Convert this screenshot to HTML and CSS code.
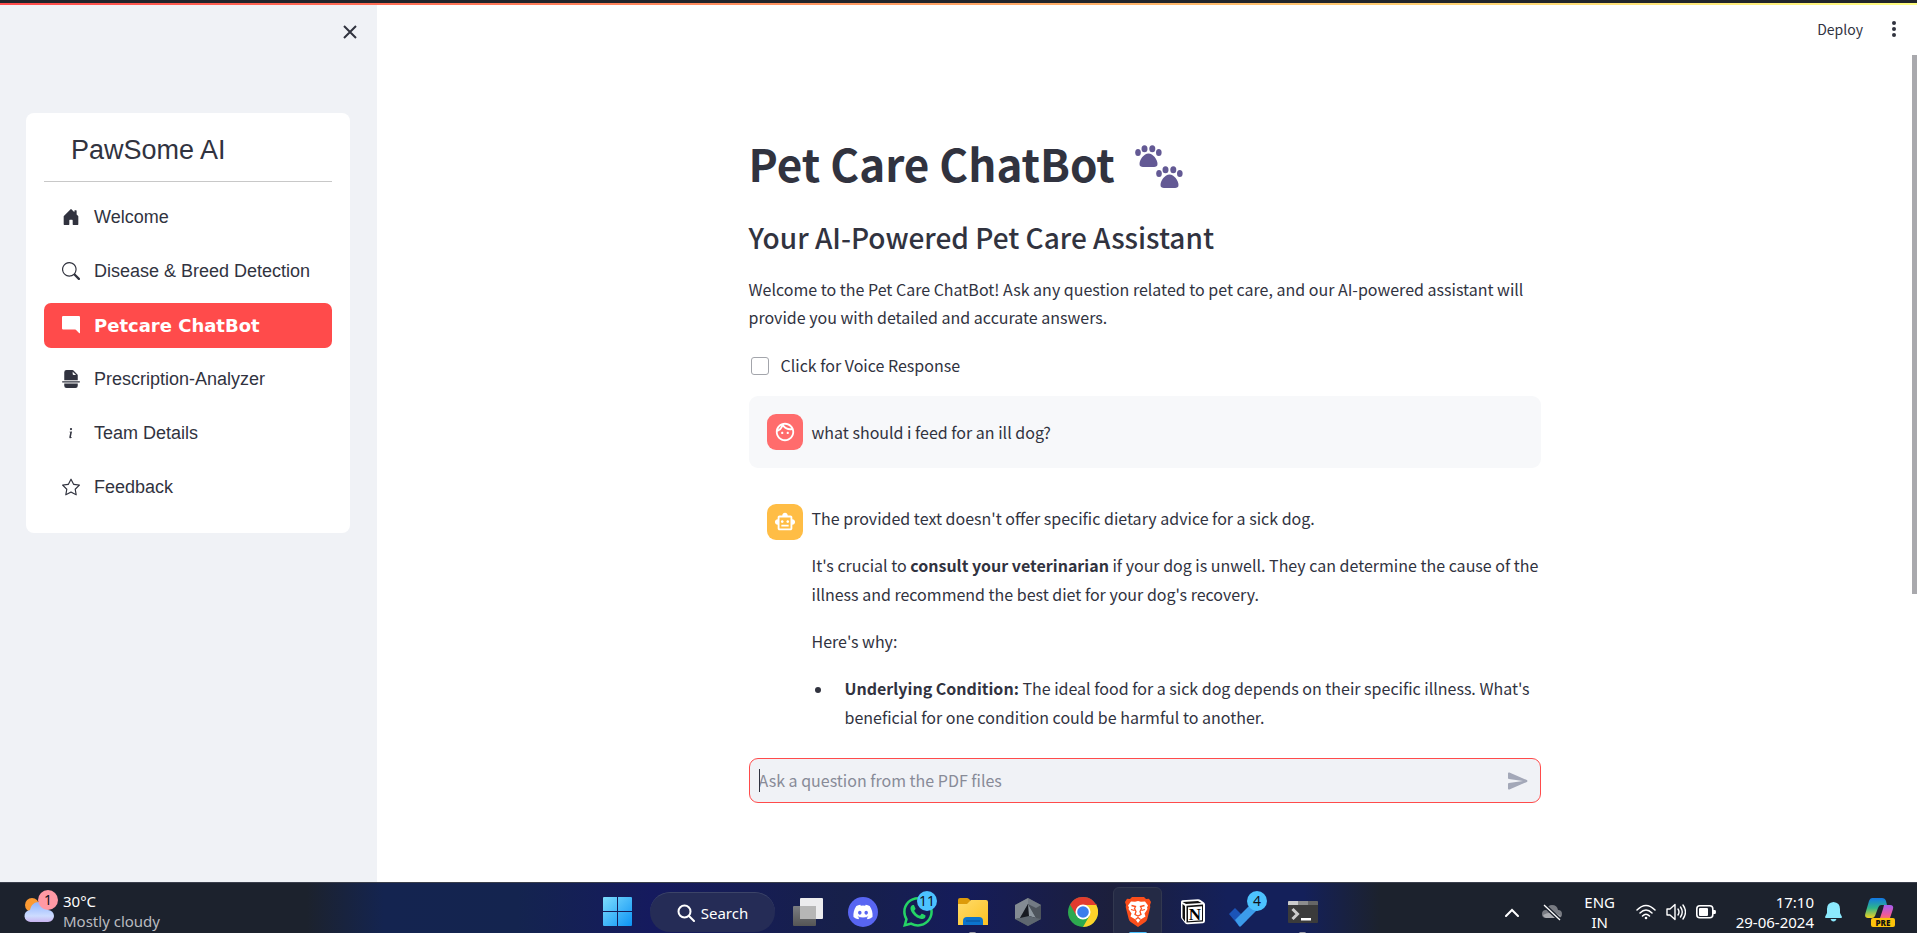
FILE: index.html
```html
<!DOCTYPE html>
<html lang="en">
<head>
<meta charset="utf-8">
<title>PawSome AI</title>
<link rel="stylesheet" href="styles.css">
</head>
<body>
<div class="edge"></div>
<div class="app">
  <aside class="sidebar">
    <div class="sidebar-top">
      <button class="icon-btn" aria-label="Close sidebar"><svg width="14" height="14" viewBox="0 0 14 14" fill="none" stroke="currentColor" stroke-width="2"><path d="M1 1l12 12M13 1L1 13"/></svg></button>
    </div>
    <nav class="menu">
      <h2 class="menu-title">PawSome AI</h2>
      <ul class="menu-list">
        <li><a class="menu-item" href="#"><svg class="menu-icon" viewBox="0 0 16 16"><path d="M6.5 14.5v-3.505c0-.245.25-.495.5-.495h2c.25 0 .5.25.5.5v3.5a.5.5 0 0 0 .5.5h4a.5.5 0 0 0 .5-.5v-7a.5.5 0 0 0-.146-.354L13 5.793V2.5a.5.5 0 0 0-.5-.5h-1a.5.5 0 0 0-.5.5v1.293L8.354 1.146a.5.5 0 0 0-.708 0l-6 6A.5.5 0 0 0 1.5 7.5v7a.5.5 0 0 0 .5.5h4a.5.5 0 0 0 .5-.5z"/></svg>Welcome</a></li>
        <li><a class="menu-item" href="#"><svg class="menu-icon" viewBox="0 0 16 16"><path d="M11.742 10.344a6.5 6.5 0 1 0-1.397 1.398h-.001c.03.04.062.078.098.115l3.85 3.85a1 1 0 0 0 1.415-1.414l-3.85-3.85a1.007 1.007 0 0 0-.115-.1zM12 6.5a5.5 5.5 0 1 1-11 0 5.5 5.5 0 0 1 11 0z"/></svg>Disease &amp; Breed Detection</a></li>
        <li><a class="menu-item active" href="#" aria-current="page"><svg class="menu-icon" viewBox="0 0 16 16"><path d="M15 0a1 1 0 0 1 1 1v13.793a.5.5 0 0 1-.854.353l-2.853-2.853a1 1 0 0 0-.707-.293H1a1 1 0 0 1-1-1V1a1 1 0 0 1 1-1z"/></svg>Petcare ChatBot</a></li>
        <li><a class="menu-item" href="#"><svg class="menu-icon" viewBox="0 0 16 16"><path d="M4 0h5.293A1 1 0 0 1 10 .293L13.707 4a1 1 0 0 1 .293.707V9H2V2a2 2 0 0 1 2-2m5.500 1.500v2a1 1 0 0 0 1 1h2zM2 12h12v2a2 2 0 0 1-2 2H4a2 2 0 0 1-2-2zM.5 10a.5.5 0 0 0 0 1h15a.5.5 0 0 0 0-1z"/></svg>Prescription-Analyzer</a></li>
        <li><a class="menu-item" href="#"><svg class="menu-icon" viewBox="0 0 16 16"><path d="m8.930 6.588-2.290.287-.082.38.45.083c.294.07.352.176.288.469l-.738 3.468c-.194.897.105 1.319.808 1.319.545 0 1.178-.252 1.465-.598l.088-.416c-.2.176-.492.246-.686.246-.275 0-.375-.193-.304-.533zM9 4.500a1 1 0 1 1-2 0 1 1 0 0 1 2 0"/></svg>Team Details</a></li>
        <li><a class="menu-item" href="#"><svg class="menu-icon" viewBox="0 0 16 16"><path d="M2.866 14.850c-.078.444.36.791.746.593l4.390-2.256 4.389 2.256c.386.198.824-.149.746-.592l-.83-4.730 3.522-3.356c.33-.314.16-.888-.282-.95l-4.898-.696L8.465.792a.513.513 0 0 0-.927 0L5.354 5.120l-4.898.696c-.441.062-.612.636-.283.95l3.523 3.356-.83 4.730zm4.905-2.767-3.686 1.894.694-3.957a.565.565 0 0 0-.163-.505L1.710 6.745l4.052-.576a.525.525 0 0 0 .393-.288L8 2.223l1.847 3.658a.525.525 0 0 0 .393.288l4.052.575-2.906 2.770a.565.565 0 0 0-.163.506l.694 3.957-3.686-1.894a.503.503 0 0 0-.461 0z"/></svg>Feedback</a></li>
      </ul>
    </nav>
  </aside>

  <main class="main">
    <header class="toolbar">
      <button class="deploy">Deploy</button>
      <button class="icon-btn" aria-label="Main menu"><svg width="6" height="16" viewBox="0 0 6 16" fill="currentColor"><circle cx="3" cy="2" r="2"/><circle cx="3" cy="8" r="2"/><circle cx="3" cy="14" r="2"/></svg></button>
    </header>
    <div class="scroll">
      <div class="column">
        <h1>Pet Care ChatBot
          <svg class="paws" viewBox="0 0 48 44" fill="#635994" role="img" aria-label="paw prints"><defs><g id="paw"><path d="M13.500 8.500c4.500 0 9 6 9 10.500 0 2.300-1.500 3-3.500 3h-11c-2 0-3.500-.7-3.500-3 0-4.500 4.500-10.500 9-10.500z"/><ellipse cx="3" cy="7.500" rx="2.800" ry="3.500"/><ellipse cx="9.500" cy="3.700" rx="3" ry="3.500"/><ellipse cx="17.300" cy="3.700" rx="3" ry="3.500"/><ellipse cx="23.800" cy="7.500" rx="2.800" ry="3.500"/></g></defs><use href="#paw"/><use href="#paw" x="21" y="21"/></svg>
        </h1>
        <h3>Your AI-Powered Pet Care Assistant</h3>
        <p class="intro">Welcome to the Pet Care ChatBot! Ask any question related to pet care, and our AI-powered assistant will provide you with detailed and accurate answers.</p>
        <label class="check"><input type="checkbox">Click for Voice Response</label>
        <section class="message user">
          <div class="avatar face"><svg viewBox="0 0 24 24"><path d="M10.250 13c0 .69-.56 1.250-1.250 1.250S7.750 13.690 7.750 13s.56-1.250 1.250-1.250 1.250.56 1.250 1.250zM15 11.750c-.69 0-1.250.56-1.250 1.250s.56 1.250 1.250 1.250 1.250-.56 1.250-1.250-.56-1.250-1.250-1.250zm7 .25c0 5.520-4.480 10-10 10S2 17.520 2 12 6.480 2 12 2s10 4.480 10 10zM10.660 4.120C12.060 6.440 14.600 8 17.500 8c.46 0 .91-.05 1.340-.12C17.440 5.560 14.900 4 12 4c-.46 0-.91.05-1.340.12zM4.420 9.470a8.046 8.046 0 0 0 3.660-4.440 8.046 8.046 0 0 0-3.660 4.440zM20 12c0-.78-.12-1.530-.33-2.240-.7.15-1.420.24-2.170.24a10 10 0 0 1-7.760-3.690A10.016 10.016 0 0 1 4 11.860c.01.04 0 .09 0 .14 0 4.410 3.590 8 8 8s8-3.590 8-8z"/></svg></div>
          <div class="text"><p>what should i feed for an ill dog?</p></div>
        </section>
        <section class="message">
          <div class="avatar robot"><svg viewBox="0 0 24 24"><path d="M20 9V7c0-1.100-.9-2-2-2h-3c0-1.660-1.340-3-3-3S9 3.340 9 5H6c-1.100 0-2 .9-2 2v2c-1.660 0-3 1.340-3 3s1.340 3 3 3v4c0 1.100.9 2 2 2h12c1.100 0 2-.9 2-2v-4c1.660 0 3-1.340 3-3s-1.340-3-3-3zm-2 10H6V7h12v12zm-9-6c-.83 0-1.500-.67-1.500-1.500S8.170 10 9 10s1.500.67 1.500 1.500S9.830 13 9 13zm7.500-1.500c0 .83-.67 1.500-1.500 1.500s-1.500-.67-1.500-1.500.67-1.500 1.500-1.500 1.500.67 1.500 1.500zM8 15h8v2H8v-2z"/></svg></div>
          <div class="text">
            <p>The provided text doesn't offer specific dietary advice for a sick dog.</p>
            <p>It's crucial to <strong>consult your veterinarian</strong> if your dog is unwell. They can determine the cause of the illness and recommend the best diet for your dog's recovery.</p>
            <p>Here's why:</p>
            <ul><li><strong>Underlying Condition:</strong> The ideal food for a sick dog depends on their specific illness. What's beneficial for one condition could be harmful to another.</li></ul>
          </div>
        </section>
      </div>
    </div>
    <div class="bottom">
      <form class="ask">
        <input type="text" placeholder="Ask a question from the PDF files" aria-label="Ask a question from the PDF files">
        <button type="button" class="icon-btn send" aria-label="Send"><svg width="24" height="24" viewBox="0 0 24 24" fill="currentColor"><path d="M3.400 20.400l17.450-7.480c.81-.35.81-1.490 0-1.840L3.400 3.600c-.66-.29-1.390.2-1.390.91L2 9.120c0 .5.37.93.87.99L17 12 2.870 13.880c-.5.07-.87.5-.87 1l.01 4.610c0 .71.73 1.200 1.390.91z"/></svg></button>
      </form>
    </div>
    <div class="thumb"></div>
  </main>
</div>

<footer class="taskbar">
  <button class="weather">
    <span class="weather-icon">
      <svg width="30" height="26" viewBox="0 0 30 26"><defs><linearGradient id="cl" x1="0" y1="0" x2="0" y2="1"><stop offset="0" stop-color="#8fb4ff"/><stop offset=".7" stop-color="#cddcff"/><stop offset="1" stop-color="#c9b4f0"/></linearGradient></defs><circle cx="8" cy="8" r="7" fill="#fb9a33"/><path d="M7 25a6 6 0 0 1-1-12c1-5 4-8 9-8s8 3 9 8a6 6 0 0 1 0 12z" fill="url(#cl)"/></svg>
      <span class="badge pink">1</span>
    </span>
    <span class="two-line"><span>30°C</span><span class="muted">Mostly cloudy</span></span>
  </button>

  <div class="apps">
    <button class="slot" aria-label="Start"><svg width="30" height="30" viewBox="0 0 30 30"><defs><linearGradient id="win" x1="0" y1="0" x2="1" y2="1"><stop offset="0" stop-color="#7ddcfd"/><stop offset="1" stop-color="#0c93f5"/></linearGradient></defs><path fill="url(#win)" d="M0 1q0-1 1-1h13v14H0zM15 0h13q1 0 1 1v13H15zM0 15h14v14H1q-1 0-1-1zM15 15h14v13q0 1-1 1H15z"/></svg></button>
    <button class="search"><svg width="18" height="18" viewBox="0 0 18 18" fill="none" stroke="#fff" stroke-width="2" stroke-linecap="round"><circle cx="7.500" cy="7.500" r="6"/><path d="M12 12l5 5"/></svg>Search</button>
    <button class="slot" aria-label="Task view"><svg width="30" height="28" viewBox="0 0 30 28"><defs><linearGradient id="tv" x1="0" y1="0" x2="0" y2="1"><stop offset="0" stop-color="#7b7d82"/><stop offset="1" stop-color="#555"/></linearGradient></defs><rect y="8" width="23" height="20" rx="1" fill="url(#tv)"/><rect x="7" width="23" height="21" rx="1" fill="#ececee"/><path d="M7 8h16v13H7z" fill="#b6b6b6"/></svg></button>
    <button class="slot" aria-label="Discord"><svg width="30" height="30" viewBox="0 0 30 30"><circle cx="15" cy="15" r="15" fill="#5865f2"/><path transform="translate(5.400 5.400) scale(1.200)" fill="#fff" d="M13.545 2.907a13.227 13.227 0 0 0-3.257-1.011.05.05 0 0 0-.052.025c-.141.25-.297.577-.406.833a12.190 12.190 0 0 0-3.658 0 8.258 8.258 0 0 0-.412-.833.051.051 0 0 0-.052-.025c-1.125.194-2.220.534-3.257 1.011a.041.041 0 0 0-.021.018C.356 6.024-.213 9.047.066 12.032c.001.014.01.028.021.037a13.276 13.276 0 0 0 3.995 2.020.05.05 0 0 0 .056-.019c.308-.42.582-.863.818-1.329a.05.05 0 0 0-.01-.059.051.051 0 0 0-.018-.011 8.875 8.875 0 0 1-1.248-.595.05.05 0 0 1-.02-.066.051.051 0 0 1 .015-.019c.084-.063.168-.129.248-.195a.05.05 0 0 1 .051-.007c2.619 1.196 5.454 1.196 8.041 0a.052.052 0 0 1 .053.007c.08.066.164.132.248.195a.051.051 0 0 1-.004.085 8.254 8.254 0 0 1-1.249.594.05.05 0 0 0-.03.03.052.052 0 0 0 .003.041c.24.465.515.909.817 1.329a.05.05 0 0 0 .056.019 13.235 13.235 0 0 0 4.001-2.020.049.049 0 0 0 .021-.037c.334-3.451-.559-6.449-2.366-9.106a.034.034 0 0 0-.02-.019Zm-8.198 7.307c-.789 0-1.438-.724-1.438-1.612 0-.889.637-1.613 1.438-1.613.807 0 1.450.73 1.438 1.613 0 .888-.637 1.612-1.438 1.612Zm5.316 0c-.788 0-1.438-.724-1.438-1.612 0-.889.637-1.613 1.438-1.613.807 0 1.451.73 1.438 1.613 0 .888-.631 1.612-1.438 1.612Z"/></svg></button>
    <button class="slot" aria-label="WhatsApp, 11 unread"><svg width="30" height="30" viewBox="0 0 16 16" fill="#25d366"><path d="M13.601 2.326A7.854 7.854 0 0 0 7.994 0C3.627 0 .068 3.558.064 7.926c0 1.399.366 2.760 1.057 3.965L0 16l4.204-1.102a7.933 7.933 0 0 0 3.790.965h.004c4.368 0 7.926-3.558 7.930-7.930A7.898 7.898 0 0 0 13.600 2.326zM7.994 14.521a6.573 6.573 0 0 1-3.356-.92l-.24-.144-2.494.654.666-2.433-.156-.251a6.560 6.560 0 0 1-1.007-3.505c0-3.626 2.957-6.584 6.591-6.584a6.560 6.560 0 0 1 4.660 1.931 6.557 6.557 0 0 1 1.928 4.660c-.004 3.639-2.961 6.592-6.592 6.592zm3.615-4.934c-.197-.099-1.170-.578-1.353-.646-.182-.065-.315-.099-.445.099-.133.197-.513.646-.627.775-.114.133-.232.148-.43.05-.197-.1-.836-.308-1.592-.985-.59-.525-.985-1.175-1.103-1.372-.114-.198-.011-.304.088-.403.087-.088.197-.232.296-.346.1-.114.133-.198.198-.33.065-.134.034-.248-.015-.347-.05-.099-.445-1.076-.612-1.470-.16-.389-.323-.335-.445-.34-.114-.007-.247-.007-.38-.007a.729.729 0 0 0-.529.247c-.182.198-.691.677-.691 1.654 0 .977.71 1.916.81 2.049.098.133 1.394 2.132 3.383 2.992.47.205.84.326 1.129.418.475.152.904.129 1.246.08.38-.058 1.171-.48 1.338-.943.164-.464.164-.86.114-.943-.049-.084-.182-.133-.38-.232z"/></svg><span class="badge blue">11</span></button>
    <button class="slot running" aria-label="File Explorer"><svg width="30" height="28" viewBox="0 0 30 28"><defs><linearGradient id="fd" x1="0" y1="0" x2="1" y2="1"><stop offset="0" stop-color="#ffdb6b"/><stop offset="1" stop-color="#fcc222"/></linearGradient></defs><path d="M0 2q0-2 2-2h7q1 0 2 1l2 2v5H0z" fill="#dd9a0a"/><path d="M0 6h9l4-4h15q2 0 2 2v23H0z" fill="url(#fd)"/><path d="M5 27v-4q0-4 4-4h12q4 0 4 4v4z" fill="#0c74cc"/><path d="M8 23h14" stroke="#0a4f94" stroke-width="1"/></svg></button>
    <button class="slot" aria-label="Visual tool"><svg width="26" height="28" viewBox="0 0 26 28"><path d="M13 0l13 7v14l-13 7L0 21V7z" fill="#4d545c"/><path d="M13 0l13 7-5 3-8-4z" fill="#737b84"/><path d="M0 7l13-7v6L5 20l-5 1z" fill="#838b93"/><path d="M13 6l8 14H5z" fill="#171b22"/><path d="M13 6l8 14-7-2z" fill="#8d979f"/><path d="M5 20l9-2 7 2 5 1-13 7-13-7z" fill="#5e6770"/></svg></button>
    <button class="slot" aria-label="Chrome"><svg width="30" height="30" viewBox="0 0 30 30"><circle cx="15" cy="15" r="15" fill="#2da94f"/><path d="M2 7.500A15 15 0 0 1 28 7.500H15L8.500 18.800z" fill="#e33b2e"/><path d="M28 7.500A15 15 0 0 1 15 30l6.500-11.200L15 7.500z" fill="#fdd32a"/><path d="M15 7.500h13.500" stroke="#e33b2e"/><circle cx="15" cy="15" r="7.500" fill="#fff"/><circle cx="15" cy="15" r="5.800" fill="#3a7cec"/></svg></button>
    <button class="slot current" aria-label="Brave"><svg width="26" height="30" viewBox="0 0 26 30"><path d="M7 0h12l2 2 3-.3L26 5l-1 3 .3 2-3 12q-.5 2-2 3L13 30l-7.300-5q-1.500-1-2-3l-3-12L1 8 0 5l2-3.300L5 2z" fill="#fb4e1b"/><path d="M13 4l3 .7 4-.2 3 4-1 2 .5 1.500-3 4.500 1 3-5 3-2.500 3.500-2.500-3.500-5-3 1-3-3-4.500L4 10.500 3 8.500l3-4 4 .2z" fill="#fff"/><path d="M6.500 8.500l4 1-1 2 1.500 3-1 3 3 1.500 3-1.500-1-3 1.500-3-1-2 4-1M6 12.500l3.500 1M20 12.500l-3.500 1M10.500 22.500l2.500-2 2.500 2" fill="none" stroke="#fb4e1b" stroke-width="1.300"/></svg></button>
    <button class="slot" aria-label="Notion"><svg width="26" height="26" viewBox="0 0 26 26"><path d="M1 3q0-1.500 1.500-1.700L18 .3q1.500 0 2.500.7l3.500 2.500q1 .8 1 2V22q0 2-2 2.200l-15.500 1q-1.500 0-2.300-1L1.800 20Q1 19 1 18z" fill="#fff"/><path d="M2.500 3L18 2l3.500 2L6 5zM2.500 5L5 7v15.500L2.500 19zM6.500 6.700L23 5.600V22.500L6.500 23.600z" fill="#111"/><path d="M8 8.200l14-1v14l-14 1z" fill="#fff"/><text x="15" y="20.500" text-anchor="middle" font-family="Liberation Serif, serif" font-weight="700" font-size="17" fill="#000">N</text></svg></button>
    <button class="slot todo" aria-label="To Do, 4 tasks"><svg width="31" height="26" viewBox="0 0 31 26"><path d="M0 13l6-6 12 12-6 6q-1 1-2 0z" fill="#1b54b8"/><path d="M6 19L25 0l6 6-19 19q-1 1-2 0z" fill="#3c9bea"/></svg><span class="badge blue">4</span></button>
    <button class="slot running" aria-label="Terminal"><svg width="30" height="22" viewBox="0 0 30 22"><rect width="30" height="22" rx="1" fill="#3b3b3b"/><path d="M0 4V1q0-1 1-1h9v4z" fill="#ccc"/><path d="M10 0h10v4H10z" fill="#8d8d8d"/><path d="M20 0h9q1 0 1 1v3H20z" fill="#666"/><path d="M4.500 8l5 5-5 5" fill="none" stroke="#ccc" stroke-width="3"/><path d="M13 17h10v2.500H13z" fill="#fff"/></svg></button>
  </div>

  <div class="tray">
    <button class="tray-btn" aria-label="Show hidden icons"><svg width="14" height="9" viewBox="0 0 14 9" fill="none" stroke="#fff" stroke-width="2" stroke-linecap="round"><path d="M1 8l6-6 6 6"/></svg></button>
    <button class="tray-btn cloud" aria-label="OneDrive"><svg width="20" height="17" viewBox="0 0 20 17"><path d="M4 14a4 4 0 0 1 0-8q2-5 6-5 5 0 6 5a4 4 0 0 1 0 8z" fill="#787b82"/><path d="M1 11q9-5 18 1l-3 2H4q-2 0-3-3z" fill="#a9abb0"/><path d="M2 1l16 15" stroke="#1c222d" stroke-width="4"/><path d="M2 1l16 15" stroke="#fff" stroke-width="1.300"/></svg></button>
    <button class="two-line lang"><span>ENG</span><span>IN</span></button>
    <button class="status" aria-label="Network, volume, battery">
      <svg width="20" height="16" viewBox="0 0 20 16" fill="none" stroke="#fff" stroke-width="1.500" stroke-linecap="round"><path d="M1 6q9-9 18 0M4 9q6-6 12 0M6.500 12q3.500-3.500 7 0"/><circle cx="10" cy="14" r="1.300" fill="#fff" stroke="none"/></svg>
      <svg width="20" height="18" viewBox="0 0 20 18" fill="none" stroke="#fff" stroke-width="1.400" stroke-linecap="round" stroke-linejoin="round"><path d="M1 6h3l5-4.500v15L4 12H1zM12 6q2 3 0 6M14.500 4q3.500 5 0 10M17 2q5 7 0 14"/></svg>
      <svg width="20" height="14" viewBox="0 0 20 14"><rect x=".8" y=".8" width="16" height="12" rx="3" fill="none" stroke="#fff" stroke-width="1.600"/><rect x="3" y="3" width="9" height="8" rx="1" fill="#fff"/><path d="M17 5h2q1 0 1 2t-1 2h-2z" fill="#fff"/></svg>
    </button>
    <button class="two-line clock"><span>17:10</span><span>29-06-2024</span></button>
    <button class="tray-btn" aria-label="Notifications"><svg width="17" height="20" viewBox="0 0 17 20" fill="#8be9fd"><path d="M8.500 0Q15 .5 15 7v4l2 4q0 1-1 1H1q-1 0-1-1l2-4V7Q2 .5 8.500 0zM5.500 17h6q-1 2.500-3 2.500t-3-2.500z"/></svg></button>
    <button class="tray-btn copilot" aria-label="Copilot"><svg width="30" height="29" viewBox="0 0 30 29"><defs><linearGradient id="ca" x1="0" y1="0" x2="0" y2="1"><stop offset="0" stop-color="#1277e6"/><stop offset=".5" stop-color="#2fb58a"/><stop offset="1" stop-color="#f3d21d"/></linearGradient><linearGradient id="cb" x1="0" y1="0" x2="0" y2="1"><stop offset="0" stop-color="#a45cf0"/><stop offset=".6" stop-color="#ee5a9c"/><stop offset="1" stop-color="#fb8a3c"/></linearGradient></defs><path d="M7 0h10q3 0 4 3l1 4h-6q-2 0-3 3l-3 8q-1 2-3 2H3q-4 0-2.500-5L4 3q1-3 3-3z" fill="url(#ca)"/><path d="M19 7h6q4 0 3 4l-3 9q-1 3-4 3h-9q2 0 3-3l3-9q1-4 1-4z" fill="url(#cb)"/><rect x="6" y="20" width="24" height="9" rx="2" fill="#fdc30b"/><text x="18" y="27.500" text-anchor="middle" font-family="Open Sans, sans-serif" font-weight="800" font-size="8" fill="#111">PRE</text></svg></button>
  </div>
</footer>
</body>
</html>
```
FILE: styles.css
```css
* { box-sizing: border-box; }

body {
  margin: 0;
  height: 100vh;
  display: flex;
  flex-direction: column;
  overflow: hidden;
  background: #fff;
  color: #31333f;
  font: 16px/29px "Noto Sans CJK SC", "Noto Sans CJK JP", "Open Sans", sans-serif;
}

button {
  border: 0;
  padding: 0;
  background: none;
  color: inherit;
  font: inherit;
}

svg { display: block; }
h1, h2, h3, p, ul { margin: 0; padding: 0; }
strong { font-weight: 600; }

.edge {
  flex: none;
  height: 5px;
  border-top: 3px solid #21252b;
  background: linear-gradient(90deg, #ff4b4b, #fffd80);
}

.app { flex: 1; min-height: 0; display: flex; }
.icon-btn { display: grid; place-items: center; }

/* Sidebar */
.sidebar { flex: none; width: 377px; padding: 0 27px 0 26px; background: #f0f2f6; }
.sidebar-top { height: 108px; margin-right: -7px; padding-top: 20px; display: flex; justify-content: flex-end; align-items: flex-start; }

.menu {
  padding: 18px 18px 23px;
  border-radius: 8px;
  background: #fff;
  font-family: "Liberation Sans", Arial, sans-serif;
}
.menu-title {
  padding: 0 27px 11px;
  margin-bottom: 13px;
  border-bottom: 1px solid #c8c8c8;
  font-size: 27px;
  line-height: 39px;
  font-weight: 400;
}
.menu-list { list-style: none; display: grid; gap: 9px; }
.menu-item {
  display: flex;
  align-items: center;
  gap: 14px;
  height: 45px;
  padding: 0 18px;
  border-radius: 7px;
  color: inherit;
  font-size: 18px;
  text-decoration: none;
}
.menu-icon { width: 18px; height: 18px; margin-bottom: 2px; fill: currentColor; }
.menu-item.active {
  background: #ff4b4b;
  color: #fff;
  font-family: "Arial Black", "DejaVu Sans", sans-serif;
  font-weight: 900;
}

/* Main area */
.main { position: relative; flex: 1; min-width: 0; padding-right: 5px; display: flex; flex-direction: column; }
.toolbar { height: 50px; padding: 0 15px 2px 20px; display: flex; justify-content: flex-end; align-items: center; gap: 28px; }
.deploy { font-size: 14px; }
.scroll { flex: 1; min-height: 0; overflow: hidden; }
.column { max-width: 792px; margin: 0 auto; padding-top: 70px; }

h1 { display: flex; align-items: center; gap: 20px; font-size: 44px; line-height: 60px; font-weight: 700; padding: 8px 0; }
.paws { width: 48px; height: 44px; margin-top: 8px; }
h3 { margin-top: 17px; font-size: 28px; line-height: 38px; font-weight: 500; }
.intro { margin-top: 19px; line-height: 28px; }

.check { display: flex; align-items: center; gap: 12px; margin-top: 20px; padding-left: 2px; height: 29px; }
.check input {
  appearance: none;
  width: 18px;
  height: 18px;
  margin: 0;
  border: 1px solid #a3a5ab;
  border-radius: 3px;
}

.message { display: flex; align-items: flex-start; gap: 9px; padding: 18px 0 18px 18px; margin-top: 18px; border-radius: 9px; }
.message.user { align-items: center; margin-top: 16px; background: #f7f8fa; }
.avatar { flex: none; display: grid; place-items: center; width: 36px; height: 36px; border-radius: 9px; }
.avatar svg { width: 22px; height: 22px; fill: #fff; }
.face { background: #ff6c6c; }
.robot { background: #ffbd45; }
.text { flex: 1; display: grid; gap: 18px; }
.text ul { padding-left: 33px; list-style: none; }
.text li { position: relative; }
.text li::before { content: ""; position: absolute; left: -30px; top: 13px; width: 6px; height: 6px; border-radius: 3px; background: #31333f; }

.bottom { padding: 18px 0 79px; background: #fff; }
.ask {
  position: relative;
  display: flex;
  align-items: center;
  max-width: 792px;
  height: 45px;
  margin: 0 auto;
  padding: 0 10px 0 9px;
  border: 1px solid #ff4b4b;
  border-radius: 9px;
  background: #f0f2f6;
}
.ask input { flex: 1; min-width: 0; padding: 0; border: 0; outline: 0; background: none; color: inherit; font: inherit; }
.ask input::placeholder { color: #888b98; }
.ask::before { content: ""; position: absolute; left: 9px; top: 10px; width: 1px; height: 23px; background: #31333f; }
.send { color: #a3a8b8; }

.thumb { position: absolute; right: 0; top: 50px; width: 5px; height: 539px; background: #a9a9ad; }

/* Taskbar */
.taskbar {
  flex: none;
  height: 51px;
  padding: 4px 0 0 3px;
  border-top: 1px solid #3a3f4c;
  display: grid;
  grid-template-columns: 1fr auto 1fr;
  align-items: start;
  overflow: hidden;
  background: linear-gradient(90deg, #1c222d 16%, #142450 20%, #14244f 27%, #151a5e 34%, #17204a 44%, #151c5a 50%, #1c1f3c 58%, #14205a 64%, #14205a 68%, #1c222d 72%);
  color: #fff;
  font: 15px/20px "Noto Sans", "Open Sans", sans-serif;
}

.two-line { display: flex; flex-direction: column; }
.muted { color: #b9bbc0; }
.weather { display: flex; gap: 9px; margin: 4px 0 0 21px; justify-self: start; text-align: left; }
.weather-icon { position: relative; padding-top: 6px; }
.badge {
  position: absolute;
  top: 4px;
  right: 8px;
  width: 20px;
  height: 20px;
  border-radius: 10px;
  background: #4cc2ff;
  color: #10131c;
  font-size: 14px;
  text-align: center;
}
.badge.pink { top: -1px; right: -4px; background: #ff99a4; }

.apps { display: flex; align-items: center; height: 50px; }
.slot { position: relative; width: 55px; height: 50px; display: grid; place-items: center; }
.slot.todo svg { margin: 4px 6px 0 0; }
.slot.current::before { content: ""; position: absolute; z-index: -1; inset: 0 3px; border: 1px solid #32384f; border-radius: 6px; background: #242a45; }
.slot.current { isolation: isolate; }
.slot.current::after, .slot.running::after {
  content: "";
  position: absolute;
  top: 45px;
  width: 7px;
  height: 3px;
  border-radius: 2px;
  background: #9a9ba5;
}
.slot.current::after { width: 18px; background: #4cc2ff; }
.search {
  width: 125px;
  height: 40px;
  margin: 0 5px;
  display: flex;
  align-items: center;
  justify-content: center;
  gap: 6px;
  border-radius: 20px;
  border-top: 1px solid #3c4468;
  background: #252c56;
}

.tray { display: flex; align-items: center; justify-content: flex-end; padding-right: 22px; height: 50px; }
.tray-btn { display: grid; place-items: center; }
.cloud { margin: 0 22px 0 23px; }
.lang { width: 32px; align-items: center; }
.status { display: flex; align-items: center; gap: 10px; margin: 0 20px; }
.clock { align-items: flex-end; margin-right: 11px; }
.copilot { margin-left: 23px; }
```
